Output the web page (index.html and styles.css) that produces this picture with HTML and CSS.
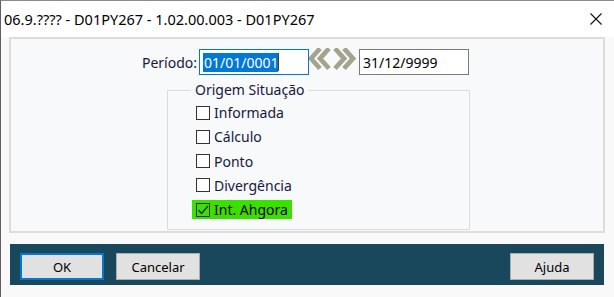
FILE: index.html
```html
<!DOCTYPE html>
<html>
<head>
  <meta charset="UTF-8">
  <title>06.9.???? - D01PY267</title>
  <link rel="stylesheet" href="styles.css">
</head>
<body>
  <div class="window">
    <div class="titlebar">
      <span class="title">06.9.???? - D01PY267 - 1.02.00.003 - D01PY267</span>
      <svg class="close" width="12" height="12" viewBox="0 0 12 12">
        <path d="M0.5 0.5 L11.5 11.5 M11.5 0.5 L0.5 11.5" stroke="#111" stroke-width="1.1" fill="none"/>
      </svg>
    </div>
    <div class="content">
      <div class="panel">
        <div class="period">
          <label class="period-label">Período:</label>
          <div class="field focused"><span class="sel">01/01/0001</span><span class="caret"></span></div>
          <svg class="range" width="50" height="26" viewBox="0 0 50 26">
            <g stroke="#a4a48e" stroke-width="4.8" fill="none" stroke-linejoin="miter">
              <polyline points="11,0.5 2,10.5 11,20.5"/>
              <polyline points="20,0.5 11,10.5 20,20.5"/>
              <polyline points="26,0.5 35,10.5 26,20.5"/>
              <polyline points="35,0.5 44,10.5 35,20.5"/>
            </g>
          </svg>
          <div class="field">31/12/9999</div>
        </div>
        <fieldset class="group">
          <legend>Origem Situação</legend>
          <div class="check"><span class="box"></span>Informada</div>
          <div class="check"><span class="box"></span>Cálculo</div>
          <div class="check"><span class="box"></span>Ponto</div>
          <div class="check"><span class="box"></span>Divergência</div>
          <div class="check marked">
            <span class="box">
              <svg width="12" height="12" viewBox="0 0 12 12"><polyline points="1.5,6 4.5,9.5 11,2" stroke="#1c2a10" stroke-width="1.2" fill="none"/></svg>
            </span>Int. Ahgora
          </div>
        </fieldset>
      </div>
      <div class="actions">
        <button class="btn default">OK</button>
        <button class="btn">Cancelar</button>
        <button class="btn help">Ajuda</button>
      </div>
    </div>
  </div>
</body>
</html>
```

FILE: styles.css
```css
html, body {
  margin: 0;
  padding: 0;
}
body {
  width: 614px;
  height: 297px;
  overflow: hidden;
  font-family: "Noto Sans", "Liberation Sans", sans-serif;
  background: #f9f9f9;
}
.window {
  height: 297px;
  box-sizing: border-box;
  border-left: 1px solid #5f5f5f;
  border-top: 1px solid #8a8a8a;
  background: #f9f9f9;
}
.titlebar {
  height: 36px;
  background: #fff;
  display: flex;
  align-items: center;
  justify-content: space-between;
  padding: 0 12px 0 3px;
}
.title {
  font-size: 14.5px;
  color: #000;
}
.content {
  padding: 0 9px 0 8px;
}
.panel {
  height: 196px;
  box-sizing: border-box;
  border: 2px solid #dcdcdc;
  background: #f8f9fb;
  padding-top: 10px;
}
.period {
  display: flex;
  align-items: center;
  margin-left: 120px;
}
.period-label {
  width: 66px;
  margin-right: 2px;
  text-align: right;
  font-size: 14px;
  color: #17173f;
}
.field {
  width: 110px;
  height: 26px;
  box-sizing: border-box;
  border: 1px solid #7a7a7a;
  background: #fff;
  padding-left: 3px;
  display: flex;
  align-items: center;
  font-size: 14px;
  color: #000;
}
.field.focused {
  border-color: #0078d7;
}
.sel {
  background: #0078d7;
  color: #fff;
  line-height: 19px;
  padding-left: 1px;
}
.caret {
  width: 1px;
  height: 18px;
  background: #5a3a1a;
}
.range {
  display: block;
  align-self: flex-start;
  margin-top: -1px;
}
.group {
  margin: 6px 0 0 156px;
  width: 303px;
  height: 149px;
  box-sizing: border-box;
  border: 1px solid #dcdcdc;
  padding: 4px 0 0 0;
}
.group legend {
  margin-left: 23px;
  padding: 0 4px;
  font-size: 14px;
  line-height: 18px;
  color: #17173f;
}
.check {
  display: flex;
  align-items: center;
  width: fit-content;
  height: 19px;
  padding: 0 4px;
  margin: 0 0 5.25px 24px;
  font-size: 14px;
  color: #17173f;
}
.check.marked {
  background: #3ce000;
  color: #000;
}
.box {
  width: 14px;
  height: 14px;
  box-sizing: border-box;
  border: 1px solid #333;
  background: #fff;
  margin-right: 4px;
  display: flex;
  align-items: center;
  justify-content: center;
}
.check.marked .box {
  background: transparent;
}
.box svg {
  display: block;
}
.actions {
  margin: 11px 1px 0 1px;
  height: 41px;
  box-sizing: border-box;
  background: #19475b;
  display: flex;
  align-items: flex-start;
  gap: 12px;
  padding: 9px 10px 0 10px;
}
.btn {
  width: 84px;
  height: 27px;
  box-sizing: border-box;
  background: #e1e1e1;
  border: 1px solid #adadad;
  font-family: "Noto Sans", "Liberation Sans", sans-serif;
  font-size: 13px;
  color: #000;
  padding: 0;
}
.btn.default {
  border: 2px solid #0078d7;
}
.btn.help {
  margin-left: auto;
}
```
